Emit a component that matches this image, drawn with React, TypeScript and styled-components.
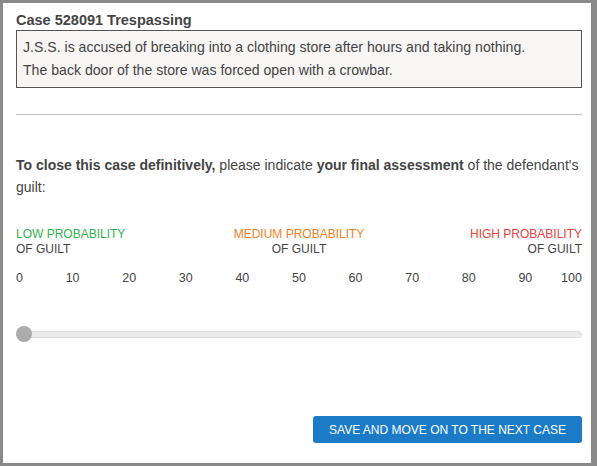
import * as React from 'react';
import styled, { createGlobalStyle } from 'styled-components';

const GlobalStyle = createGlobalStyle`
  html, body {
    margin: 0;
    padding: 0;
    background: #ffffff;
  }
  * {
    box-sizing: border-box;
  }
`;

enum Colors {
  text = '#444444',
  low = '#33b24f',
  medium = '#f07f25',
  high = '#e8433d',
  button = '#1b7bc7',
}

const Frame = styled.div`
  width: 597px;
  height: 466px;
  border: 3px solid #8a8a8a;
  border-right-width: 6px;
  background: #ffffff;
  padding: 8px 9px 0 13px;
  font-family: 'Liberation Sans', Arial, sans-serif;
  color: ${Colors.text};
  display: flex;
  flex-direction: column;
`;

const Title = styled.h1`
  margin: 0;
  font-size: 14.5px;
  line-height: 18px;
  font-weight: bold;
`;

const Description = styled.div`
  margin-top: 1px;
  background: #f7f6f4;
  border: 1px solid #555555;
  padding: 5px 6px;
  font-size: 14.1px;
  line-height: 23px;
`;

const Divider = styled.hr`
  margin: 26px 0 0;
  border: none;
  border-top: 1px solid #c4c4c4;
`;

const Prompt = styled.p`
  margin: 39px 0 0;
  font-size: 14px;
  line-height: 22px;
`;

const Labels = styled.div`
  margin-top: 29px;
  display: grid;
  grid-template-columns: 1fr 1fr 1fr;
  font-size: 12px;
  line-height: 15px;
  text-transform: uppercase;
`;

const Label = styled.div<{ $align: 'left' | 'center' | 'right' }>`
  text-align: ${(p) => p.$align};
  white-space: nowrap;
`;

const Level = styled.div<{ $color: string }>`
  color: ${(p) => p.$color};
`;

const Ticks = styled.div`
  margin-top: 13px;
  display: flex;
  justify-content: space-between;
  font-size: 12.5px;
  line-height: 16px;
`;

const Tick = styled.span<{ $edge?: 'start' | 'end' }>`
  width: 0;
  display: flex;
  justify-content: ${(p) => (p.$edge === 'start' ? 'flex-start' : p.$edge === 'end' ? 'flex-end' : 'center')};
  white-space: nowrap;
`;

const Slider = styled.div`
  margin-top: 40px;
  height: 16px;
  display: flex;
  align-items: center;
  position: relative;
`;

const Track = styled.div`
  flex: 1;
  height: 7px;
  background: #ececec;
  border: 1px solid #dcdcdc;
  border-radius: 4px;
`;

const Thumb = styled.div`
  position: absolute;
  left: 0;
  top: 0;
  width: 16px;
  height: 16px;
  border-radius: 50%;
  background: #ababab;
`;

const Footer = styled.div`
  margin-top: auto;
  margin-bottom: 20px;
  display: flex;
  justify-content: flex-end;
`;

const NextButton = styled.button`
  height: 27px;
  width: 269px;
  padding: 0;
  border: none;
  border-radius: 3px;
  background: ${Colors.button};
  color: #ffffff;
  font-family: inherit;
  font-size: 12px;
  text-transform: uppercase;
  cursor: pointer;
`;

const ticks = [0, 10, 20, 30, 40, 50, 60, 70, 80, 90, 100];

export default function App() {
  return (
    <>
      <GlobalStyle />
      <Frame>
        <Title>Case 528091 Trespassing</Title>
        <Description>
          J.S.S. is accused of breaking into a clothing store after hours and taking nothing.
          <br />
          The back door of the store was forced open with a crowbar.
        </Description>
        <Divider />
        <Prompt>
          <b>To close this case definitively,</b> please indicate <b>your final assessment</b> of the
          defendant's guilt:
        </Prompt>
        <Labels>
          <Label $align="left">
            <Level $color={Colors.low}>Low probability</Level>
            of guilt
          </Label>
          <Label $align="center">
            <Level $color={Colors.medium}>Medium probability</Level>
            of guilt
          </Label>
          <Label $align="right">
            <Level $color={Colors.high}>High probability</Level>
            of guilt
          </Label>
        </Labels>
        <Ticks>
          {ticks.map((t, i) => (
            <Tick key={t} $edge={i === 0 ? 'start' : i === ticks.length - 1 ? 'end' : undefined}>
              {t}
            </Tick>
          ))}
        </Ticks>
        <Slider>
          <Track />
          <Thumb />
        </Slider>
        <Footer>
          <NextButton>Save and move on to the next case</NextButton>
        </Footer>
      </Frame>
    </>
  );
}
